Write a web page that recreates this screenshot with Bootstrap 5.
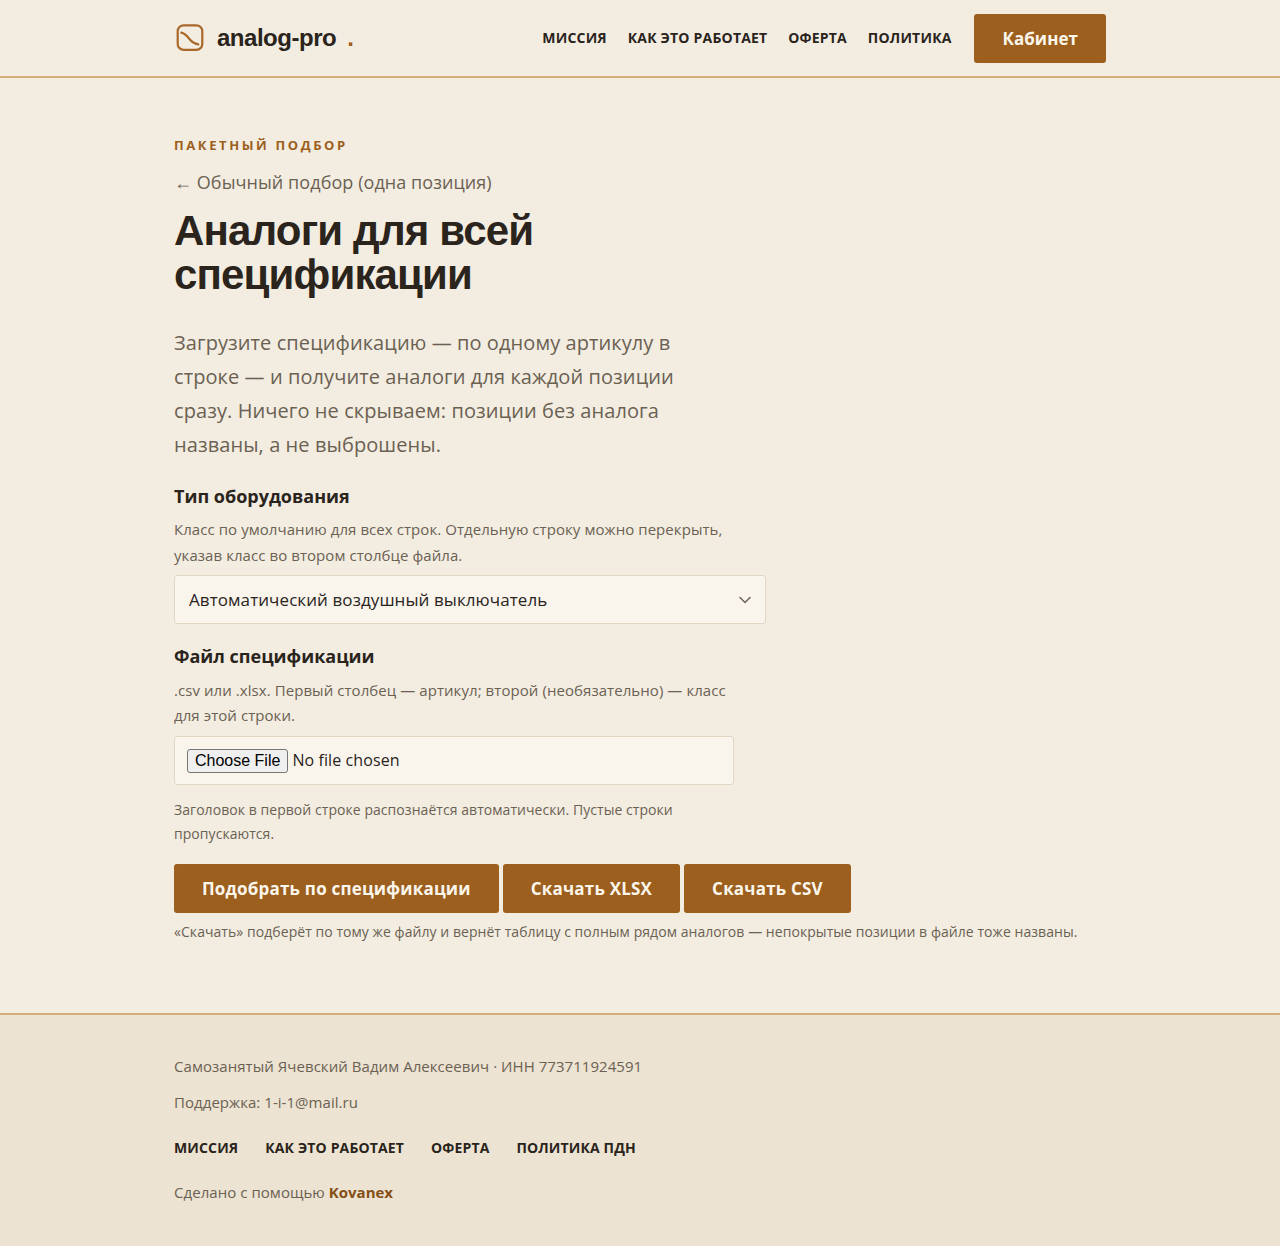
<!DOCTYPE html>
<html lang="ru">
  <head>
    <meta charset="UTF-8" />
    <title>analog-pro</title>
    <meta name="viewport" content="width=device-width, initial-scale=1.0" />
    <link href="https://cdn.jsdelivr.net/npm/bootstrap@5.3.3/dist/css/bootstrap.min.css" rel="stylesheet" />
    <style>
      body {
        background: #f3ede1;
        color: #2a241c;
        font-family: "Open Sans", sans-serif;
        letter-spacing: 0.065px;
      }
      .wrap {
        width: 980px;
        margin: 0 auto;
        padding: 0 24px;
      }
      .top-bar {
        height: 78px;
        border-bottom: 2px solid #d4ae78;
      }
      .top-bar .wrap {
        height: 76px;
      }
      .brand {
        color: #2a241c;
        font: 700 24px "Liberation Sans", sans-serif;
        letter-spacing: -0.48px;
        text-decoration: none;
        gap: 13px;
      }
      .brand-dot {
        color: #9c5f1e;
        margin-left: 11px;
      }
      .top-links {
        gap: 20.800px;
      }
      .top-links a {
        color: #2a241c;
        font-size: 14px;
        font-weight: 700;
        letter-spacing: 0.2px;
        margin-bottom: 2px;
        text-decoration: none;
        text-transform: uppercase;
      }
      .foot-links a {
        color: #2a241c;
        font-size: 14px;
        font-weight: 700;
        letter-spacing: 0.14px;
        text-decoration: none;
        text-transform: uppercase;
      }
      .btn-rust,
      .top-links a.btn-rust {
        background: #9c5f1e;
        color: #fbf6ec;
        border: 0;
        border-radius: 3px;
        font-size: 17px;
        font-weight: 700;
        letter-spacing: 0.2px;
        margin-bottom: 0;
        text-transform: none;
        padding: 0 28px;
        height: 49px;
        line-height: 49px;
      }
      .btn-rust:hover {
        background: #854f16;
        color: #fbf6ec;
      }
      .top-links a.top-cta {
        letter-spacing: 0.05px;
        margin-left: 2px;
      }
      .page-main {
        padding-top: 58px;
        height: 935px;
      }
      .kicker {
        color: #9c5f1e;
        font-size: 13px;
        font-weight: 700;
        letter-spacing: 2.6px;
        line-height: 18px;
        text-transform: uppercase;
        margin-bottom: 15px;
      }
      .back-link {
        display: block;
        color: #6b6153;
        font-size: 18px;
        line-height: 27px;
        text-decoration: none;
      }
      .page-title {
        font: 700 42px/44px "Liberation Sans", sans-serif;
        letter-spacing: -0.84px;
        color: #2a241c;
        max-width: 592px;
        margin: 13px 0 29px;
      }
      .intro {
        color: #6b6153;
        font-size: 20px;
        letter-spacing: 0.08px;
        line-height: 34px;
        max-width: 520px;
        margin-bottom: 21px;
      }
      .field-title {
        font-size: 18px;
        font-weight: 700;
        letter-spacing: 0;
        line-height: 27px;
        margin-bottom: 7px;
      }
      .spec-select + .field-title {
        margin-bottom: 8px;
      }
      .field-help {
        color: #6b6153;
        font-size: 15px;
        line-height: 25.5px;
        max-width: 560px;
        margin-bottom: 7px;
      }
      .file-help {
        line-height: 25px;
        margin-bottom: 8px;
      }
      .spec-select {
        width: 592px;
        height: 49px;
        background-color: #f9f5ec;
        background-image: url("data:image/svg+xml,%3csvg xmlns='http://www.w3.org/2000/svg' viewBox='0 0 12 8'%3e%3cpath fill='none' stroke='%236b6153' stroke-width='1.5' stroke-linecap='round' d='M1 1.500l5 5 5-5'/%3e%3c/svg%3e");
        background-position: right 14px center;
        background-size: 12px 8px;
        border: 1px solid #e0d6c3;
        border-radius: 3px;
        color: #2a241c;
        font-size: 17px;
        letter-spacing: 0.08px;
        padding: 0 14px;
        margin-bottom: 19px;
      }
      .spec-file {
        display: block;
        width: 560px;
        height: 49px;
        background: #f9f5ec;
        border: 1px solid #e0d6c3;
        border-radius: 3px;
        color: #2a241c;
        font-size: 16px;
        letter-spacing: 0.1px;
        padding: 11px 12px 13px;
        margin-bottom: 13px;
      }
      .spec-file::file-selector-button {
        background: #efefef;
        border: 1px solid #767676;
        border-radius: 3px;
        color: #000;
        font-family: "Liberation Sans", sans-serif;
        font-size: 16px;
        height: 24px;
        letter-spacing: 0;
        line-height: 20px;
        padding: 0 7px;
      }
      .note-small {
        color: #6b6153;
        font-size: 14px;
        letter-spacing: 0.055px;
        line-height: 24px;
        max-width: 560px;
      }
      .actions {
        gap: 4px;
        margin: 18px 0 7px;
      }
      .page-foot {
        background: #ece3d2;
        border-top: 2px solid #d4ae78;
        height: 233px;
        padding-top: 39px;
        color: #6b6153;
        font-size: 15px;
        letter-spacing: 0.05px;
      }
      .page-foot p {
        line-height: 24px;
        margin-bottom: 12px;
      }
      .foot-links {
        gap: 27px;
        margin-bottom: 22px;
        line-height: 21px;
        margin-top: 23px;
      }
      .maker {
        color: #854f16;
        font-weight: 700;
        letter-spacing: 0;
        text-decoration: none;
      }
    </style>
  </head>
  <body>
    <header class="top-bar">
      <div class="wrap d-flex align-items-center justify-content-between">
        <a class="brand d-flex align-items-center" href="#">
          <svg width="30" height="30" viewBox="0 0 30 30" fill="none" stroke="#a8682a" stroke-width="2.200" stroke-linecap="round">
            <rect x="3.700" y="2.300" width="24.600" height="24.600" rx="6" />
            <path d="M7.300 9.700C11 10.500 13 13 15 15.500S19 20.500 24.300 21.300" />
          </svg>
          <span>analog-pro<span class="brand-dot">.</span></span>
        </a>
        <nav class="top-links d-flex align-items-center">
          <a href="#">Миссия</a>
          <a href="#">Как это работает</a>
          <a href="#">Оферта</a>
          <a href="#">Политика</a>
          <a class="btn btn-rust top-cta" href="#">Кабинет</a>
        </nav>
      </div>
    </header>

    <main class="page-main">
      <div class="wrap">
        <div class="kicker">Пакетный подбор</div>
        <a class="back-link" href="#">← Обычный подбор (одна позиция)</a>
        <h1 class="page-title">Аналоги для всей спецификации</h1>
        <p class="intro">Загрузите спецификацию — по одному артикулу в строке — и получите аналоги для каждой позиции сразу. Ничего не скрываем: позиции без аналога названы, а не выброшены.</p>

        <form>
          <div class="field-title">Тип оборудования</div>
          <p class="field-help">Класс по умолчанию для всех строк. Отдельную строку можно перекрыть, указав класс во втором столбце файла.</p>
          <select class="form-select spec-select">
            <option>Автоматический воздушный выключатель</option>
          </select>

          <div class="field-title">Файл спецификации</div>
          <p class="field-help file-help">.csv или .xlsx. Первый столбец — артикул; второй (необязательно) — класс для этой строки.</p>
          <input class="spec-file" type="file" />
          <p class="note-small mb-0">Заголовок в первой строке распознаётся автоматически. Пустые строки пропускаются.</p>

          <div class="actions d-flex">
            <button class="btn btn-rust" type="button">Подобрать по спецификации</button>
            <button class="btn btn-rust" type="button">Скачать XLSX</button>
            <button class="btn btn-rust" type="button">Скачать CSV</button>
          </div>
          <p class="note-small mw-100 mb-0">«Скачать» подберёт по тому же файлу и вернёт таблицу с полным рядом аналогов — непокрытые позиции в файле тоже названы.</p>
        </form>
      </div>
    </main>

    <footer class="page-foot">
      <div class="wrap">
        <p>Самозанятый Ячевский Вадим Алексеевич · ИНН 773711924591</p>
        <p>Поддержка: 1-i-1@mail.ru</p>
        <div class="foot-links d-flex">
          <a href="#">Миссия</a>
          <a href="#">Как это работает</a>
          <a href="#">Оферта</a>
          <a href="#">Политика ПДн</a>
        </div>
        <p class="mb-0">Сделано с помощью <a class="maker" href="#">Kovanex</a></p>
      </div>
    </footer>
    <script src="https://cdn.jsdelivr.net/npm/bootstrap@5.3.3/dist/js/bootstrap.bundle.min.js"></script>
  </body>
</html>
